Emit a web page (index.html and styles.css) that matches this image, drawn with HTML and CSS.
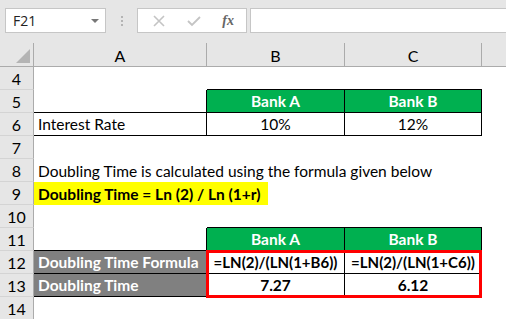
FILE: index.html
```html
<!DOCTYPE html>
<html lang="en">
<head>
    <meta charset="UTF-8">
    <meta name="viewport" content="width=device-width, initial-scale=1.0">
    <title>Doubling Time</title>
    <link rel="stylesheet" href="styles.css">
</head>
<body>
    <div class="toolbar">
        <div class="name-box">
            <span>F21</span>
            <span class="caret"></span>
        </div>
        <div class="grip"><i></i><i></i><i></i></div>
        <div class="fx-box">
            <svg width="14" height="14" viewBox="0 0 14 14"><path d="M2 2L12 12M12 2L2 12" stroke="#c4c4c4" stroke-width="1.6" fill="none"/></svg>
            <svg width="16" height="14" viewBox="0 0 16 14"><path d="M2 7L6 11L14 3" stroke="#c4c4c4" stroke-width="1.8" fill="none"/></svg>
            <span class="fx">fx</span>
        </div>
        <div class="formula-input"></div>
    </div>

    <div class="sheet">
        <!-- header row -->
        <div class="corner"><span class="tri"></span></div>
        <div class="col-head">A</div>
        <div class="col-head">B</div>
        <div class="col-head">C</div>
        <div class="col-head last"></div>

        <!-- 4 -->
        <div class="row-head">4</div>
        <div class="cell"></div>
        <div class="cell bb"></div>
        <div class="cell bb"></div>
        <div class="cell"></div>

        <!-- 5 -->
        <div class="row-head">5</div>
        <div class="cell bb br"></div>
        <div class="cell green bb br">Bank A</div>
        <div class="cell green bb br">Bank B</div>
        <div class="cell"></div>

        <!-- 6 -->
        <div class="row-head">6</div>
        <div class="cell bb br">Interest Rate</div>
        <div class="cell center bb br">10%</div>
        <div class="cell center bb br">12%</div>
        <div class="cell"></div>

        <!-- 7 -->
        <div class="row-head">7</div>
        <div class="cell"></div>
        <div class="cell"></div>
        <div class="cell"></div>
        <div class="cell"></div>

        <!-- 8 -->
        <div class="row-head">8</div>
        <div class="cell wide">Doubling Time is calculated using the formula given below</div>

        <!-- 9 -->
        <div class="row-head">9</div>
        <div class="cell wide"><span class="yellow">Doubling Time = Ln (2) / Ln (1+r)</span></div>

        <!-- 10 -->
        <div class="row-head">10</div>
        <div class="cell"></div>
        <div class="cell bb"></div>
        <div class="cell bb"></div>
        <div class="cell"></div>

        <!-- 11 -->
        <div class="row-head">11</div>
        <div class="cell bb br"></div>
        <div class="cell green bb br">Bank A</div>
        <div class="cell green bb br">Bank B</div>
        <div class="cell"></div>

        <!-- 12 -->
        <div class="row-head">12</div>
        <div class="cell gray bb br">Doubling Time Formula</div>
        <div class="cell center bold formula bb br b12">=LN(2)/(LN(1+B6))</div>
        <div class="cell center bold formula bb br c12">=LN(2)/(LN(1+C6))</div>
        <div class="cell"></div>

        <!-- 13 -->
        <div class="row-head">13</div>
        <div class="cell gray bb br">Doubling Time</div>
        <div class="cell center bold bb br b13">7.27</div>
        <div class="cell center bold bb br c13">6.12</div>
        <div class="cell"></div>

        <!-- 14 -->
        <div class="row-head">14</div>
        <div class="cell"></div>
        <div class="cell"></div>
        <div class="cell"></div>
        <div class="cell"></div>

        <!-- red frame over B12:C13 -->
        <div class="frame"></div>
    </div>
</body>
</html>
```

FILE: styles.css
```css
body {
    margin: 0;
    background: #fff;
    font-family: Lato, "Liberation Sans", sans-serif;
    font-size: 15.5px;
    color: #000;
    overflow: hidden;
}

/* formula bar */
.toolbar {
    height: 43px;
    background: #e6e6e6;
    display: flex;
    align-items: flex-start;
    padding-top: 8px;
    box-sizing: border-box;
}
.name-box {
    margin-left: 5px;
    width: 101px;
    height: 25px;
    box-sizing: border-box;
    background: #fff;
    border: 1px solid #c6c6c6;
    display: flex;
    align-items: center;
    justify-content: space-between;
    padding: 0 6px 0 7px;
    font-family: "Open Sans", sans-serif;
    font-size: 14px;
    color: #222;
}
.caret {
    width: 0;
    height: 0;
    border-left: 4px solid transparent;
    border-right: 4px solid transparent;
    border-top: 4px solid #777;
}
.grip {
    width: 31px;
    height: 25px;
    display: flex;
    flex-direction: column;
    align-items: center;
    justify-content: center;
    gap: 2px;
}
.grip i {
    width: 2px;
    height: 2px;
    background: #b4b4b4;
}
.fx-box {
    width: 110px;
    height: 25px;
    box-sizing: border-box;
    background: #fff;
    border: 1px solid #c6c6c6;
    display: flex;
    align-items: center;
    justify-content: space-between;
    padding: 0 12px 0 14px;
}
.fx {
    font-family: "Liberation Serif", serif;
    font-style: italic;
    font-weight: bold;
    font-size: 14px;
    color: #666;
}
.formula-input {
    flex: 1;
    margin-left: 3px;
    height: 25px;
    box-sizing: border-box;
    background: #fff;
    border: 1px solid #c6c6c6;
    border-right: none;
}

/* worksheet grid */
.sheet {
    display: grid;
    grid-template-columns: 34px 173px 138px 137px 1fr;
    grid-template-rows: 24px repeat(11, 23px);
}
.corner,
.col-head,
.row-head {
    background: #e6e6e6;
    box-sizing: border-box;
}
.corner {
    border-right: 1px solid #ababab;
    border-bottom: 1px solid #ababab;
    position: relative;
}
.tri {
    position: absolute;
    right: 3px;
    bottom: 3px;
    width: 0;
    height: 0;
    border-left: 14px solid transparent;
    border-bottom: 14px solid #b4b4b4;
}
.col-head {
    border-right: 1px solid #ababab;
    border-bottom: 1px solid #ababab;
    display: flex;
    align-items: center;
    justify-content: center;
    padding-top: 2px;
    font-size: 16px;
}
.col-head.last {
    border-right: none;
}
.row-head {
    border-right: 1px solid #ababab;
    border-bottom: 1px solid #d4d4d4;
    display: flex;
    align-items: center;
    justify-content: center;
    padding-top: 1px;
    font-size: 16px;
}
.cell {
    box-sizing: border-box;
    display: flex;
    align-items: flex-end;
    padding: 0 4px 2px;
    white-space: nowrap;
}
.wide {
    grid-column: 2 / 6;
}
.center {
    justify-content: center;
}
.bold {
    font-weight: bold;
}
.formula {
    font-size: 15px;
}
.bb {
    border-bottom: 1px solid #000;
}
.br {
    border-right: 1px solid #000;
}
.green {
    background: #00b050;
    color: #fff;
    font-weight: bold;
    justify-content: center;
}
.gray {
    background: #808080;
    color: #fff;
    font-weight: bold;
}
.yellow {
    background: #ffff00;
    font-weight: bold;
    margin: 0 0 -2px -4px;
    padding: 0 4px 2px;
    height: 23px;
    width: 234px;
    box-sizing: border-box;
    display: flex;
    align-items: flex-end;
}

/* rows 12-13 of B and C sit under the frame, so they get fixed spots */
.b12 { grid-area: 10 / 3; }
.c12 { grid-area: 10 / 4; }
.b13 { grid-area: 11 / 3; }
.c13 { grid-area: 11 / 4; }
.frame {
    grid-column: 3 / 5;
    grid-row: 10 / 12;
    margin: -1px 0 -1px -1px;
    border: 3px solid #f00;
}
```
